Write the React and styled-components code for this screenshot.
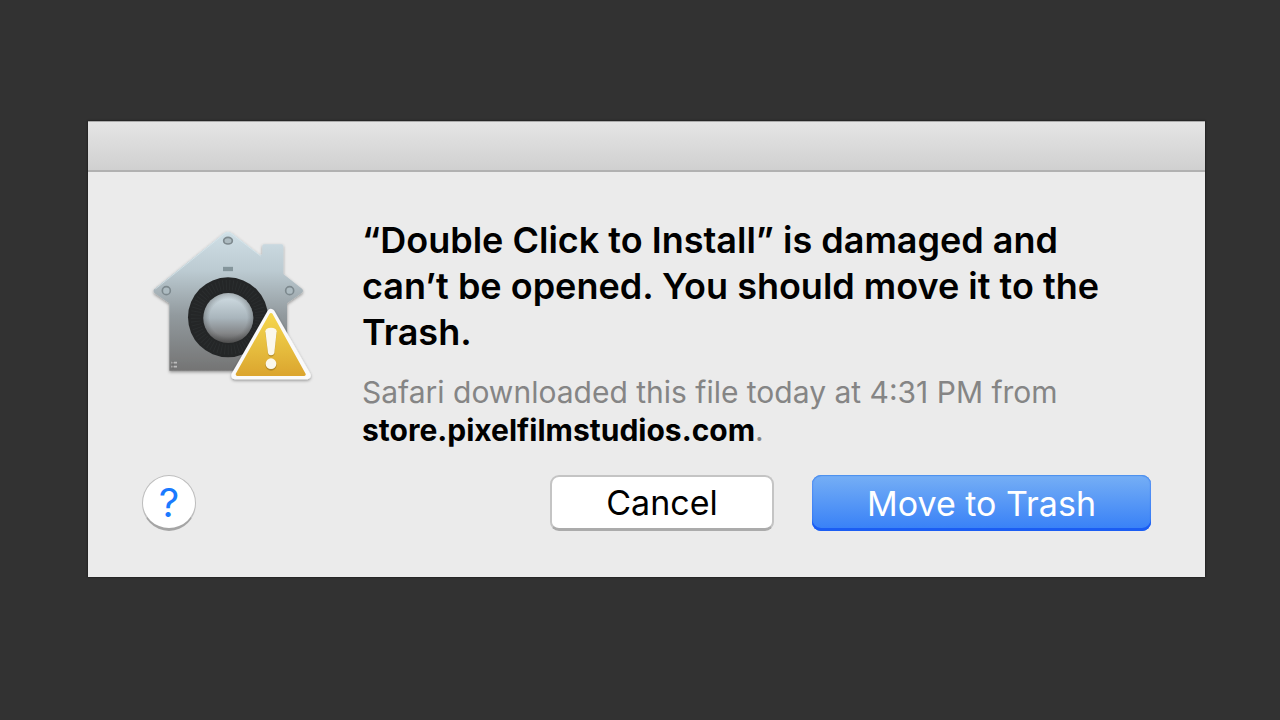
import React from 'react'
import styled, { createGlobalStyle, css } from 'styled-components'

export default function App() {
  return (
    <>
      <GlobalStyle />
      <Desktop>
        <Dialog role='alertdialog' aria-labelledby='title' aria-describedby='info'>
          <TitleBar />
          <Content>
            <Message>
              <GatekeeperIcon />
              <Copy>
                <Title id='title'>
                  “Double Click to Install” is damaged and can’t be opened. You
                  should move it to the Trash.
                </Title>
                <Info id='info'>
                  Safari downloaded this file today at 4:31 PM from{' '}
                  <Source>store.pixelfilmstudios.com</Source>.
                </Info>
              </Copy>
            </Message>
            <Footer>
              <HelpButton type='button'>?</HelpButton>
              <Actions>
                <Button type='button'>Cancel</Button>
                <Button type='button' $primary>
                  Move to Trash
                </Button>
              </Actions>
            </Footer>
          </Content>
        </Dialog>
      </Desktop>
    </>
  )
}

// House with a vault dial and a warning triangle over its corner
const GatekeeperIcon = () => (
  <Icon viewBox='6 -9 540 522' aria-hidden='true'>
    <defs>
      <linearGradient id='house' x1='0' y1='0' x2='0' y2='1'>
        <stop offset='0' stopColor='#cfdfe6' />
        <stop offset='0.28' stopColor='#bccbd2' />
        <stop offset='0.6' stopColor='#929a9e' />
        <stop offset='1' stopColor='#747474' />
      </linearGradient>
      <linearGradient id='knob' x1='0' y1='0' x2='0' y2='1'>
        <stop offset='0' stopColor='#d3e0e6' />
        <stop offset='0.5' stopColor='#a9b5bc' />
        <stop offset='0.8' stopColor='#858789' />
        <stop offset='1' stopColor='#585858' />
      </linearGradient>
      <radialGradient id='shade'>
        <stop offset='0.75' stopColor='#333' stopOpacity='0' />
        <stop offset='1' stopColor='#333' stopOpacity='0.3' />
      </radialGradient>
      <linearGradient id='warning' x1='0' y1='0' x2='0' y2='1'>
        <stop offset='0' stopColor='#f5d64c' />
        <stop offset='0.6' stopColor='#e5bb3d' />
        <stop offset='1' stopColor='#dca62f' />
      </linearGradient>
      <filter id='shadow' x='-20%' y='-20%' width='140%' height='140%'>
        <feDropShadow dx='0' dy='4' stdDeviation='5' floodOpacity='0.4' />
      </filter>
    </defs>
    <path
      filter='url(#shadow)'
      fill='url(#house)'
      d='M250 41Q264 29 278 41L360 105L367 103V78Q367 73 372 73H425Q430 73 430 78V162L486 206Q492 212 486 218L441 250V452H88V250L44 220Q37 212 44 206Z'
    />
    <path d='M46 207L250 44Q264 32 278 44L362 108' fill='none' stroke='#dce9ee' strokeWidth='3' opacity='0.7' />
    <g fill='#adbbc1' stroke='#7d898e' strokeWidth='5'>
      <ellipse cx='264' cy='62' rx='13' ry='10' />
      <circle cx='79' cy='212' r='12' />
      <circle cx='449' cy='212' r='12' />
    </g>
    <path d='M249 147H279' stroke='#84959b' strokeWidth='13' />
    <path d='M94 428H111M94 440H111' stroke='#bcbcbc' strokeWidth='5' />
    <path d='M99 423V446' stroke='#666' strokeWidth='3' />
    <circle cx='264' cy='292' r='120' fill='#242627' />
    <circle cx='264' cy='292' r='97' fill='none' stroke='#2b2e2f' strokeWidth='30' strokeDasharray='3 7' />
    <circle cx='265' cy='294' r='75' fill='url(#knob)' />
    <circle cx='265' cy='294' r='75' fill='url(#shade)' />
    <path
      filter='url(#shadow)'
      d='M393 279L500 466H286Z'
      fill='#fafafa'
      stroke='#fafafa'
      strokeWidth='24'
      strokeLinejoin='round'
    />
    <path
      d='M393 284L492 463H292Z'
      fill='url(#warning)'
      stroke='url(#warning)'
      strokeWidth='10'
      strokeLinejoin='round'
    />
    <g fill='#8c6a1b' opacity='0.5' transform='translate(0 4)'>
      <path d='M376 334Q377 323 393 323T410 334L403 399Q401 406 393 406T384 399Z' />
      <circle cx='393' cy='431' r='17' />
    </g>
    <g fill='#fbf8ec'>
      <path d='M376 334Q377 323 393 323T410 334L403 399Q401 406 393 406T384 399Z' />
      <circle cx='393' cy='431' r='16' />
    </g>
  </Icon>
)

const GlobalStyle = createGlobalStyle`
  * {
    box-sizing: border-box;
  }

  body {
    margin: 0;
    background: #323232;
    font-family: Inter, 'Liberation Sans', sans-serif;
  }
`

const Desktop = styled.main`
  min-height: 100vh;
  padding: 121px 75px 48px 88px;
`

const Dialog = styled.section`
  background: #ebebeb;
  box-shadow: 0 0 2px #111;
`

const TitleBar = styled.header`
  height: 51px;
  background: linear-gradient(#e5e5e5, #d0d0d0);
  border-top: 1px solid #aaa;
  border-bottom: 2px solid #b1b1b1;
`

const Content = styled.div`
  padding: 45px 54px 46px;
`

const Message = styled.div`
  display: flex;
  align-items: flex-start;
  gap: 40px;
`

const Icon = styled.svg`
  flex: none;
  width: 180px;
  height: 174px;
`

const Copy = styled.div`
  max-width: 760px;
`

const Title = styled.h1`
  margin: 0;
  color: #000;
  font-size: 36px;
  font-weight: 600;
  line-height: 46px;
`

const Info = styled.p`
  margin: 18px 0 0;
  color: #858585;
  font-size: 30px;
  line-height: 38px;
`

const Source = styled.strong`
  color: #000;
  font-weight: 700;
`

const Footer = styled.footer`
  display: flex;
  align-items: center;
  justify-content: space-between;
  margin-top: 26px;
`

const Actions = styled.div`
  display: flex;
  gap: 38px;
`

const Button = styled.button`
  width: ${(props) => (props.$primary ? '339px' : '224px')};
  height: 56px;
  padding: 0;
  border: 2px solid #c4c4c4;
  border-bottom: 3px solid #ababab;
  border-radius: 9px;
  background: #fff;
  color: #000;
  font-family: inherit;
  font-size: 34px;

  ${(props) =>
    props.$primary &&
    css`
      border: 0;
      background: linear-gradient(#76aff5, #367ff7);
      box-shadow: inset 0 -3px #1b5df3, inset 0 1px #4e92ee,
        inset 0 0 2px #1b5df3;
      color: #fff;
    `}
`

const HelpButton = styled.button`
  width: 54px;
  height: 56px;
  padding: 0;
  border: 1px solid #bdbdbd;
  border-bottom: 3px solid #a5a5a5;
  border-radius: 50%;
  background: #fff;
  color: #1a7aff;
  font-family: inherit;
  font-size: 40px;
  font-weight: 400;
`
